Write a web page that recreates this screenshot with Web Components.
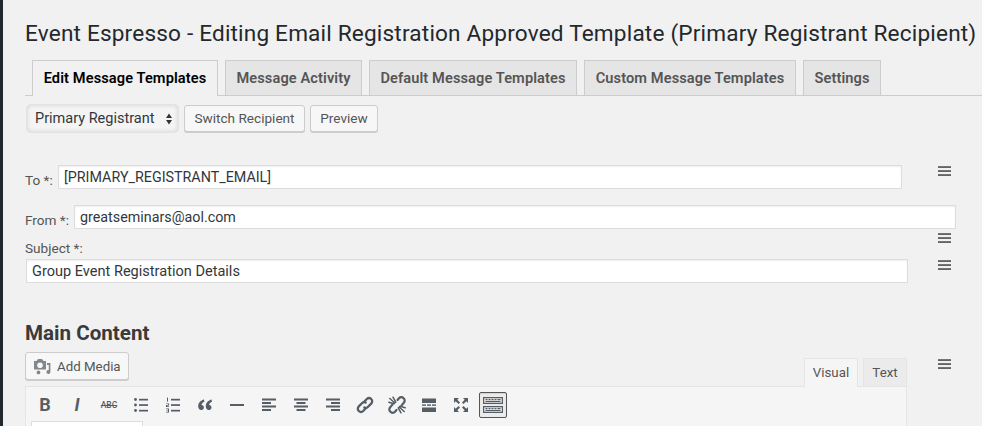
<!DOCTYPE html>
<html lang="en">
<head>
<meta charset="utf-8">
<title>Event Espresso</title>
<style>
    html, body { margin: 0; height: 426px; overflow: hidden; background: #f1f1f1; }
    body { font-family: Roboto, "Liberation Sans", sans-serif; color: #444; }
</style>
</head>
<body>
<ee-page>
    <h1 slot="title">Event Espresso - Editing Email Registration Approved Template (Primary Registrant Recipient)</h1>
    <ee-tabs>
        <ee-tab active>Edit Message Templates</ee-tab>
        <ee-tab style="width:137px">Message Activity</ee-tab>
        <ee-tab style="width:208px">Default Message Templates</ee-tab>
        <ee-tab style="width:212px">Custom Message Templates</ee-tab>
        <ee-tab style="width:78px">Settings</ee-tab>
    </ee-tabs>
    <ee-actions></ee-actions>
    <ee-field label="To *:" value="[PRIMARY_REGISTRANT_EMAIL]" width="844" label-width="33" gap="36" style="margin-top:33px"></ee-field>
    <ee-field label="From *:" value="greatseminars@aol.com" width="882" label-width="49" wrap style="margin-top:16px"></ee-field>
    <ee-field label="Subject *:" value="Group Event Registration Details" width="882" gap="30" stacked style="--value-size:14.55px"></ee-field>
    <ee-editor></ee-editor>
</ee-page>

<script>
const BAR = '#555d66';
const FONT = 'Roboto, "Liberation Sans", sans-serif';

class EePage extends HTMLElement {
    constructor() {
        super();
        this.attachShadow({ mode: 'open' }).innerHTML = `
            <style>
                :host { display: block; height: 426px; box-sizing: border-box; border-left: 3px solid #23282d; padding: 16px 0 0 22px; }
                ::slotted(h1) { margin: 0 0 9px; font: 400 22.6px/35px ${FONT}; letter-spacing: .18px; color: #23282d; white-space: nowrap; }
            </style>
            <slot name="title"></slot>
            <slot></slot>
        `;
    }
}

class EeTabs extends HTMLElement {
    constructor() {
        super();
        this.attachShadow({ mode: 'open' }).innerHTML = `
            <style>
                :host { display: flex; gap: 7px; height: 35px; padding-left: 7px; border-bottom: 1px solid #ccc; }
            </style>
            <slot></slot>
        `;
    }
}

class EeTab extends HTMLElement {
    constructor() {
        super();
        this.attachShadow({ mode: 'open' }).innerHTML = `
            <style>
                :host { display: flex; align-items: center; justify-content: center; box-sizing: border-box; height: 35px; width: 186px;
                    border: 1px solid #ccc; border-bottom: 0; background: #e5e5e5; color: #555;
                    font: 600 14.6px/1 ${FONT}; letter-spacing: .1px; white-space: nowrap; }
                :host([active]) { background: #f1f1f1; color: #000; height: 36px; padding-bottom: 1px; }
            </style>
            <slot></slot>
        `;
    }
}

class EeActions extends HTMLElement {
    constructor() {
        super();
        this.attachShadow({ mode: 'open' }).innerHTML = `
            <style>
                :host { display: flex; height: 27px; margin: 9px 0 0 2px; font: 400 13.6px/1 ${FONT}; }
                .select { box-sizing: border-box; width: 151px; display: flex; align-items: center; justify-content: space-between; padding: 2px 6px 0 8px;
                    border-radius: 4px; background: #f4f4f4; box-shadow: inset 0 0 4px #d0d0d0, 0 0 0 1px #e2e2e2; color: #32373c; font-size: 14.5px; margin-right: 6px; white-space: nowrap; }
                button { box-sizing: border-box; height: 27px; padding: 0; border: 1px solid #ccc; border-radius: 3px; background: #f7f7f7;
                    box-shadow: 0 1px 0 #ccc; color: #555; font: inherit; }
                svg { display: block; flex: none; margin-top: -2px; }
            </style>
            <div class="select">Primary Registrant
                <svg width="6" height="12" viewBox="0 0 6 12"><path d="M3 0.5 6 5H0zM3 11.5 0 7h6z" fill="#333"/></svg>
            </div>
            <button style="width:121px;margin-right:5px">Switch Recipient</button>
            <button style="width:68px">Preview</button>
        `;
    }
}

class EeHandle extends HTMLElement {
    constructor() {
        super();
        this.attachShadow({ mode: 'open' }).innerHTML = `
            <style>
                :host { display: block; width: 13px; height: 10px; }
                svg { display: block; }
            </style>
            <svg width="13" height="10" viewBox="0 0 13 10" fill="#555">
                <rect y="0.2" width="13" height="1.7"/><rect y="4.2" width="13" height="1.7"/><rect y="8.2" width="13" height="1.7"/>
            </svg>
        `;
    }
}

class EeField extends HTMLElement {
    constructor() {
        super();
        this.attachShadow({ mode: 'open' });
    }
    connectedCallback() {
        const label = this.getAttribute('label');
        const value = this.getAttribute('value');
        const width = this.getAttribute('width');
        const labelWidth = this.getAttribute('label-width');
        const gap = this.getAttribute('gap') || 0;
        const stacked = this.hasAttribute('stacked');
        const wrap = this.hasAttribute('wrap');
        this.shadowRoot.innerHTML = `
            <style>
                :host { display: block; font: 400 13.6px/14px ${FONT}; color: #555; }
                .row { display: flex; align-items: flex-start; flex-wrap: wrap; width: 957px; }
                label { margin: 8px 0 0 0; white-space: nowrap; ${labelWidth ? `width:${labelWidth}px;` : ''} }
                .stacked label { margin: 0 0 4px 0; flex: 0 0 100%; }
                .box { box-sizing: border-box; height: 24px; width: ${width}px; padding: 0 5px; background: #fff; border: 1px solid #ddd;
                    box-shadow: inset 0 1px 2px rgba(0,0,0,.07); color: #32373c; font-size: var(--value-size, 14.3px); line-height: 23px; white-space: nowrap; }
                .stacked .box { margin-left: 1px; }
                ee-handle { margin: 1px 0 0 ${gap}px; }
                .wrap ee-handle { margin: 4px 0 -2px 913px; }
                .wrap .gap { flex: 0 0 100%; height: 0; }
            </style>
            <div class="row ${stacked ? 'stacked' : ''} ${wrap ? 'wrap' : ''}">
                <label>${label}</label>
                <div class="box">${value}</div>
                ${wrap ? '<div class="gap"></div>' : ''}
                <ee-handle></ee-handle>
            </div>
        `;
    }
}

class EeTool extends HTMLElement {
    constructor() {
        super();
        this.attachShadow({ mode: 'open' }).innerHTML = `
            <style>
                :host { display: flex; align-items: center; justify-content: center; box-sizing: border-box; width: 28px; height: 26px; color: ${BAR};
                    border: 1px solid transparent; border-radius: 2px; }
                :host([active]) { border-color: #555; background: #ebebeb; box-shadow: inset 0 1px 1px rgba(0,0,0,.1); }
                ::slotted(svg) { display: block; }
            </style>
            <slot></slot>
        `;
    }
}

// dashicons tekenen we zelf na, 20x20 box
const icon = (body) => `<svg width="20" height="20" viewBox="0 0 20 20" fill="${BAR}">${body}</svg>`;
const lines = (rows) => rows.map(r => `<rect x="${r[0]}" y="${r[1]}" width="${r[2]}" height="1.7"/>`).join('');

const ICONS = {
    ul: icon(`<circle cx="4.5" cy="4.5" r="1.4"/><circle cx="4.5" cy="10" r="1.4"/><circle cx="4.5" cy="15.5" r="1.4"/>` + lines([[8, 3.8, 9], [8, 9.2, 9], [8, 14.8, 9]])),
    ol: `<svg width="20" height="20" viewBox="0 0 20 20" fill="${BAR}">` + lines([[8, 3.8, 9], [8, 9.2, 9], [8, 14.8, 9]]) +
        `<rect x="4" y="2.6" width="1" height="4"/><path d="M3 8.4h3v2.2H4.2v.7H6v.7H3v-2.1h1.9v-.8H3zM3 13.4h3v4H3v-.7h2v-.9H3.6v-.6H5v-1H3z"/></svg>`,
    quote: icon(`<path d="M9 4.5C5.8 5.3 3.2 7.6 3.2 11.2c0 2.3 1.3 3.9 3 3.9 1.5 0 2.7-1.1 2.7-2.6 0-1.4-1-2.5-2.4-2.6.2-1.3 1.3-2.5 2.9-3.2zM16.6 4.5c-3.2.8-5.8 3.1-5.8 6.7 0 2.3 1.3 3.9 3 3.9 1.5 0 2.7-1.1 2.7-2.6 0-1.4-1-2.5-2.4-2.6.2-1.3 1.3-2.5 2.9-3.2z"/>`),
    hr: icon(`<rect x="3" y="9" width="14" height="2"/>`),
    left: icon(lines([[3, 3.5, 14], [3, 7, 9], [3, 10.5, 14], [3, 14, 9]]).replace(/1\.7/g, '2')),
    center: icon(lines([[3, 3.5, 14], [5.5, 7, 9], [3, 10.5, 14], [5.5, 14, 9]]).replace(/1\.7/g, '2')),
    right: icon(lines([[3, 3.5, 14], [8, 7, 9], [3, 10.5, 14], [8, 14, 9]]).replace(/1\.7/g, '2')),
    link: `<svg width="20" height="20" viewBox="0 0 20 20" fill="none" stroke="${BAR}" stroke-width="2.3" stroke-linecap="round">
        <path d="M9 7 11.8 4a3.2 3.2 0 0 1 4.4 0 3.2 3.2 0 0 1 0 4.6L12.8 12a3 3 0 0 1-3.5.5"/>
        <path d="M11 13 8.2 16a3.2 3.2 0 0 1-4.4 0 3.2 3.2 0 0 1 0-4.6L7.2 8a3 3 0 0 1 3.5-.5"/>
    </svg>`,
    unlink: `<svg width="20" height="20" viewBox="0 0 20 20" fill="none" stroke="${BAR}" stroke-width="2.2" stroke-linecap="round">
        <path d="M10.5 5 12 3.2a3.2 3.2 0 0 1 4.6 0 3.2 3.2 0 0 1 .2 4.6L14.6 10.4"/>
        <path d="M9.5 15 8 16.8a3.2 3.2 0 0 1-4.6 0 3.2 3.2 0 0 1-.2-4.6L5.4 9.6"/>
        <path stroke-width="1.5" d="M2.8 3.5l5 4.5M6 2.2l2.8 5M1.8 7.2l5.2 1.6M17.2 16.5l-5-4.5M14 17.8l-2.8-5M18.2 12.8 13 11.2"/>
    </svg>`,
    more: icon(`<rect x="3" y="3.5" width="14" height="4.5"/><rect x="3" y="12.5" width="14" height="4.5"/><rect x="3" y="9.4" width="4" height="1.4"/><rect x="8" y="9.4" width="4" height="1.4"/><rect x="13" y="9.4" width="4" height="1.4"/>`),
    full: icon(`<path d="M3 3h5L6.3 4.7 9 7.5 7.5 9 4.7 6.3 3 8zM17 3v5l-1.7-1.7L12.5 9 11 7.5l2.7-2.8L12 3zM3 17v-5l1.7 1.7L7.5 11 9 12.5l-2.7 2.8L8 17zM17 17h-5l1.7-1.7L11 12.5l1.5-1.5 2.8 2.7L17 12z"/>`),
    kitchen: `<svg width="22" height="20" viewBox="0 0 22 20">
        <path fill="${BAR}" fill-rule="evenodd" d="M1 2h20v7H1zM2.2 3.2v4.6h17.6V3.2zM1 11h20v7H1zM2.2 12.2v4.6h17.6v-4.6z"/>
        <path fill="${BAR}" d="M3.5 4h2v1.2h-2zM6.5 4h2v1.2h-2zM9.5 4h2v1.2h-2zM12.5 4h2v1.2h-2zM15.5 4h3v1.2h-3zM3.5 6h15v1h-15zM3.5 13h2v1.2h-2zM6.5 13h2v1.2h-2zM9.5 13h2v1.2h-2zM12.5 13h2v1.2h-2zM15.5 13h3v1.2h-3zM3.5 15h15v1h-15z"/>
    </svg>`
};

class EeEditor extends HTMLElement {
    constructor() {
        super();
        const tool = (name) => `<ee-tool>${ICONS[name]}</ee-tool>`;
        this.attachShadow({ mode: 'open' }).innerHTML = `
            <style>
                :host { display: flex; align-items: flex-start; width: 957px; font-family: ${FONT}; }
                .main { width: 882px; flex: none; }
                h2 { margin: 0 0 7px; height: 24px; font: 700 20.6px/24px ${FONT}; color: #3a3a3a; }
                .top { display: flex; align-items: flex-end; justify-content: space-between; height: 34px; }
                .media { display: flex; align-items: center; gap: 5px; box-sizing: border-box; width: 104px; height: 28px; margin-bottom: 6px; padding-left: 7px;
                    border: 1px solid #ccc; border-radius: 3px; background: #f7f7f7; box-shadow: 0 1px 0 #ccc; color: #555; font-size: 13.3px; white-space: nowrap; }
                .switch { display: flex; gap: 5px; }
                .switch div { box-sizing: border-box; height: 28px; display: flex; align-items: center; justify-content: center; font-size: 13.3px; color: #555;
                    border: 1px solid #e5e5e5; border-bottom: 0; background: #ebebeb; }
                .switch .on { background: #f5f5f5; height: 29px; margin-bottom: -1px; padding-bottom: 1px; position: relative; }
                .box { height: 60px; border: 1px solid #e5e5e5; background: #f5f5f5; box-sizing: border-box; }
                .bar { display: flex; gap: 4px; height: 26px; padding: 5px 0 0 5px; }
                .letter { font-size: 18px; font-weight: 700; line-height: 1; }
                .abc { font-size: 8.5px; font-weight: 500; text-decoration: line-through; }
                .format { width: 112px; height: 20px; margin: 3px 0 0 5px; box-sizing: border-box; background: #fff; border: 1px solid #ddd; }
                ee-handle { margin: 76px 0 0 31px; flex: none; }
            </style>
            <div class="main" style="margin-top:38px">
                <h2>Main Content</h2>
                <div class="top">
                    <div class="media">
                        <svg width="19" height="17" viewBox="0 0 19 17" fill="#82878c" style="flex:none">
                            <path fill-rule="evenodd" d="M1 3h2.5L5 1h4l1.5 2H13v8.5H1zM7 4.5a2.8 2.8 0 1 0 0 5.6 2.8 2.8 0 0 0 0-5.6z"/>
                            <path d="M14 5h3.4v9a2 2 0 1 1-1.6-2V7H14zM5.5 12.5a1.9 1.9 0 1 1 0 3.8 1.9 1.9 0 0 1 0-3.8z"/>
                        </svg>Add Media
                    </div>
                    <div class="switch">
                        <div class="on" style="width:54px">Visual</div>
                        <div style="width:44px">Text</div>
                    </div>
                </div>
                <div class="box">
                    <div class="bar">
                        <ee-tool><span class="letter">B</span></ee-tool>
                        <ee-tool><span class="letter" style="font-style:italic">I</span></ee-tool>
                        <ee-tool><span class="abc">ABC</span></ee-tool>
                        ${['ul', 'ol', 'quote', 'hr', 'left', 'center', 'right', 'link', 'unlink', 'more', 'full'].map(tool).join('')}
                        <ee-tool active>${ICONS.kitchen}</ee-tool>
                    </div>
                    <div class="format"></div>
                </div>
            </div>
            <ee-handle></ee-handle>
        `;
    }
}

customElements.define('ee-page', EePage);
customElements.define('ee-tabs', EeTabs);
customElements.define('ee-tab', EeTab);
customElements.define('ee-actions', EeActions);
customElements.define('ee-handle', EeHandle);
customElements.define('ee-field', EeField);
customElements.define('ee-tool', EeTool);
customElements.define('ee-editor', EeEditor);
</script>
</body>
</html>
